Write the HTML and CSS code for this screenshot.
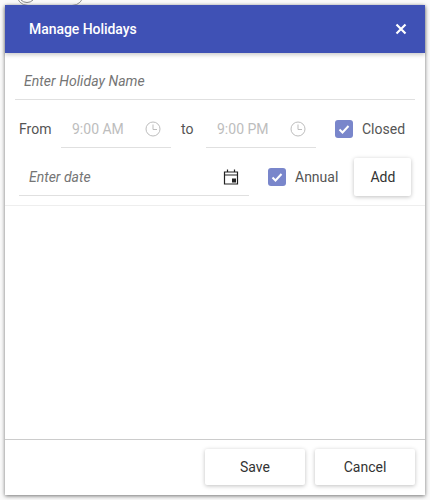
FILE: index.html
```html
<!DOCTYPE html>
<html lang="en">
<head>
  <meta charset="UTF-8">
  <title>Manage Holidays</title>
  <link rel="stylesheet" href="styles.css">
</head>
<body>
  <div class="behind-chip"><span class="behind-dot"></span></div>
  <div class="dialog">
    <div class="dialog-header">
      <span class="dialog-title">Manage Holidays</span>
      <svg class="close-icon" width="12" height="12" viewBox="0 0 12 12"><path d="M1.5 1.5l9 9M10.5 1.5l-9 9" fill="none" stroke="#fff" stroke-width="2.2"/></svg>
    </div>
    <div class="name-row">
      <div class="name-field">Enter Holiday Name</div>
    </div>
    <div class="time-row">
      <span class="label from-label">From</span>
      <div class="time-field">
        <span>9:00 AM</span>
        <svg width="16" height="16" viewBox="0 0 16 16"><circle cx="8" cy="8" r="7" fill="none" stroke="#bdbdbd" stroke-width="1"/><path d="M8 3.5v5h4" fill="none" stroke="#bdbdbd" stroke-width="1"/></svg>
      </div>
      <span class="label to-label">to</span>
      <div class="time-field">
        <span>9:00 PM</span>
        <svg width="16" height="16" viewBox="0 0 16 16"><circle cx="8" cy="8" r="7" fill="none" stroke="#bdbdbd" stroke-width="1"/><path d="M8 3.5v5h4" fill="none" stroke="#bdbdbd" stroke-width="1"/></svg>
      </div>
      <div class="check-wrap closed-check">
        <span class="check-box"><svg width="18" height="18" viewBox="0 0 18 18"><path d="M4.5 9.5l3 3 6-6.5" fill="none" stroke="#fff" stroke-width="2"/></svg></span>
        <span class="label">Closed</span>
      </div>
    </div>
    <div class="date-row">
      <div class="date-field">
        <span>Enter date</span>
        <svg width="16" height="16" viewBox="0 0 16 16"><path d="M1.5 3h13v12h-13zM1.5 6h13M4.5 0.5v3M11.5 0.5v3" fill="none" stroke="#222" stroke-width="1.2"/><rect x="9" y="9.5" width="4" height="4" fill="#222"/></svg>
      </div>
      <div class="check-wrap annual-check">
        <span class="check-box"><svg width="18" height="18" viewBox="0 0 18 18"><path d="M4.5 9.5l3 3 6-6.5" fill="none" stroke="#fff" stroke-width="2"/></svg></span>
        <span class="label">Annual</span>
      </div>
      <button class="btn add-btn">Add</button>
    </div>
    <div class="list-area"></div>
    <div class="dialog-footer">
      <button class="btn footer-btn">Save</button>
      <button class="btn footer-btn">Cancel</button>
    </div>
  </div>
</body>
</html>
```

FILE: styles.css
```css
body {
  margin: 0;
  height: 500px;
  padding: 5px 5px;
  box-sizing: border-box;
  background: #fafafa;
  font-family: 'Roboto', sans-serif;
  font-size: 14px;
  color: #333;
  overflow: hidden;
  position: relative;
}
.behind-chip {
  position: absolute;
  left: 16px;
  top: -18px;
  width: 66px;
  height: 22px;
  border: 1px solid #999;
  border-radius: 12px;
}
.behind-dot {
  position: absolute;
  left: 1px;
  top: 2px;
  width: 16px;
  height: 16px;
  border: 1px solid #888;
  border-radius: 50%;
}
.dialog {
  position: relative;
  height: 490px;
  width: 420px;
  background: #fff;
  display: flex;
  flex-direction: column;
  box-shadow: 0 1px 4px rgba(0,0,0,0.55);
}
.dialog-header {
  height: 48px;
  flex: none;
  background: #3f51b5;
  color: #fff;
  display: flex;
  align-items: center;
  justify-content: space-between;
  padding: 0 18px 0 24px;
  box-shadow: 0 2px 4px rgba(0,0,0,0.2);
  font-weight: 500;
  letter-spacing: -0.05px;
}
.name-row {
  height: 47px;
  flex: none;
  padding: 0 10px;
}
.name-field {
  height: 47px;
  box-sizing: border-box;
  border-bottom: 1px solid #e0e0e0;
  padding: 20px 9px 0;
  line-height: 16px;
  font-style: italic;
  color: #757575;
  letter-spacing: 0.05px;
}
.label {
  color: #555;
}
.time-row {
  height: 48px;
  box-sizing: border-box;
  flex: none;
  display: flex;
  align-items: center;
  padding: 10px 0 0 14px;
}
.from-label {
  width: 42px;
}
.to-label {
  width: 35px;
  padding-left: 10px;
  box-sizing: border-box;
}
.time-field {
  width: 110px;
  height: 38px;
  box-sizing: border-box;
  border-bottom: 1px solid #e0e0e0;
  display: flex;
  align-items: center;
  justify-content: space-between;
  padding: 0 10px 0 11px;
  color: #bdbdbd;
}
.check-wrap {
  display: flex;
  align-items: center;
  gap: 9px;
}
.closed-check {
  margin-left: 19px;
}
.check-box {
  width: 18px;
  height: 18px;
  border-radius: 3px;
  background: #7986cb;
  display: block;
}
.check-box svg {
  display: block;
}
.date-row {
  height: 58px;
  flex: none;
  display: flex;
  align-items: center;
  padding: 1px 0 0 14px;
  border-bottom: 1px solid #eee;
  box-sizing: border-box;
}
.date-field {
  width: 230px;
  height: 38px;
  align-self: flex-end;
  margin-bottom: 9px;
  box-sizing: border-box;
  border-bottom: 1px solid #e0e0e0;
  display: flex;
  align-items: center;
  justify-content: space-between;
  padding: 0 10px;
  font-style: italic;
  color: #757575;
}
.annual-check {
  margin-left: 19px;
}
.btn {
  border: none;
  background: #fff;
  border-radius: 2px;
  font-family: inherit;
  font-size: 14px;
  color: #333;
  box-shadow: 0 1px 4px rgba(0,0,0,0.25);
  padding: 0;
}
.add-btn {
  width: 57px;
  height: 38px;
  margin-left: 16px;
}
.list-area {
  flex: 1;
  border-bottom: 1px solid #ccc;
}
.dialog-footer {
  height: 55px;
  flex: none;
  display: flex;
  align-items: center;
  justify-content: flex-end;
  gap: 10px;
  padding: 0 10px 1px 0;
  box-sizing: border-box;
}
.footer-btn {
  width: 100px;
  height: 36px;
}
```
